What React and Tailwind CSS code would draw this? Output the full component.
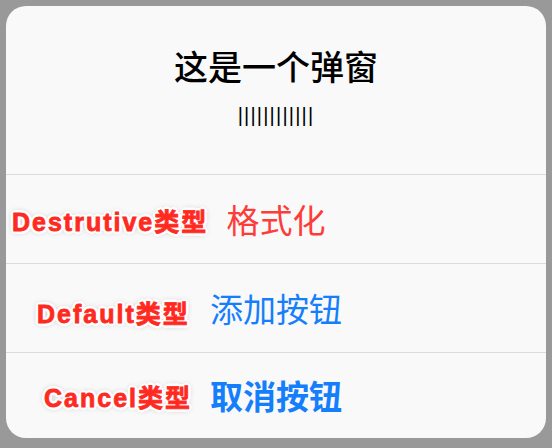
import React from 'react';

const outline =
  '[text-shadow:-2px_-2px_0_#fff,2px_-2px_0_#fff,-2px_2px_0_#fff,2px_2px_0_#fff,0_-3px_0_#fff,0_3px_0_#fff,-3px_0_0_#fff,3px_0_0_#fff,0_0_6px_rgba(0,0,0,0.45)]';

function Tag({ children, className = '' }) {
  return (
    <span
      className={`absolute top-1/2 -translate-y-1/2 whitespace-nowrap font-bold text-[25px] leading-none tracking-[2px] text-[#ff2a1f] [-webkit-text-stroke:0.8px_#ff2a1f] ${outline} ${className}`}
      style={{ fontFamily: '"Liberation Sans", "Noto Sans CJK SC", sans-serif' }}
    >
      {children}
    </span>
  );
}

function ActionRow({ label, text, color, bold, tagClass, height }) {
  return (
    <div className={`relative flex items-center justify-center border-t border-[#dcdcdc] ${height}`}>
      <span className={`text-[33px] leading-none ${color} ${bold ? 'font-semibold' : 'font-normal'}`}>
        {text}
      </span>
      <Tag className={tagClass}>{label}</Tag>
    </div>
  );
}

export default function App() {
  return (
    <div
      className="w-[552px] h-[448px] bg-[#999999] p-[6px]"
      style={{ fontFamily: '"Noto Sans CJK SC", "Liberation Sans", sans-serif' }}
    >
      <div className="w-[540px] h-[432px] bg-[#f9f9f9] rounded-[20px] overflow-hidden flex flex-col">
        {/* header */}
        <div className="flex flex-col items-center pt-[40px] h-[168px]">
          <div className="text-[34px] leading-[40px] font-medium text-black">这是一个弹窗</div>
          <div
            className="mt-[17px] text-[20px] leading-[24px] tracking-[1.2px] text-black"
            style={{ fontFamily: '"Liberation Sans", sans-serif' }}
          >
            ||||||||||||
          </div>
        </div>

        {/* actions */}
        <ActionRow
          label="Destrutive类型"
          text="格式化"
          color="text-[#fc3d39]"
          tagClass="left-[6px] mt-[3px]"
          height="h-[89px]"
        />
        <ActionRow
          label="Default类型"
          text="添加按钮"
          color="text-[#157efb]"
          tagClass="left-[31px] mt-[6px]"
          height="h-[89px]"
        />
        <ActionRow
          label="Cancel类型"
          text="取消按钮"
          color="text-[#157efb]"
          bold
          tagClass="left-[38px] mt-[2px]"
          height="h-[86px]"
        />
      </div>
    </div>
  );
}
